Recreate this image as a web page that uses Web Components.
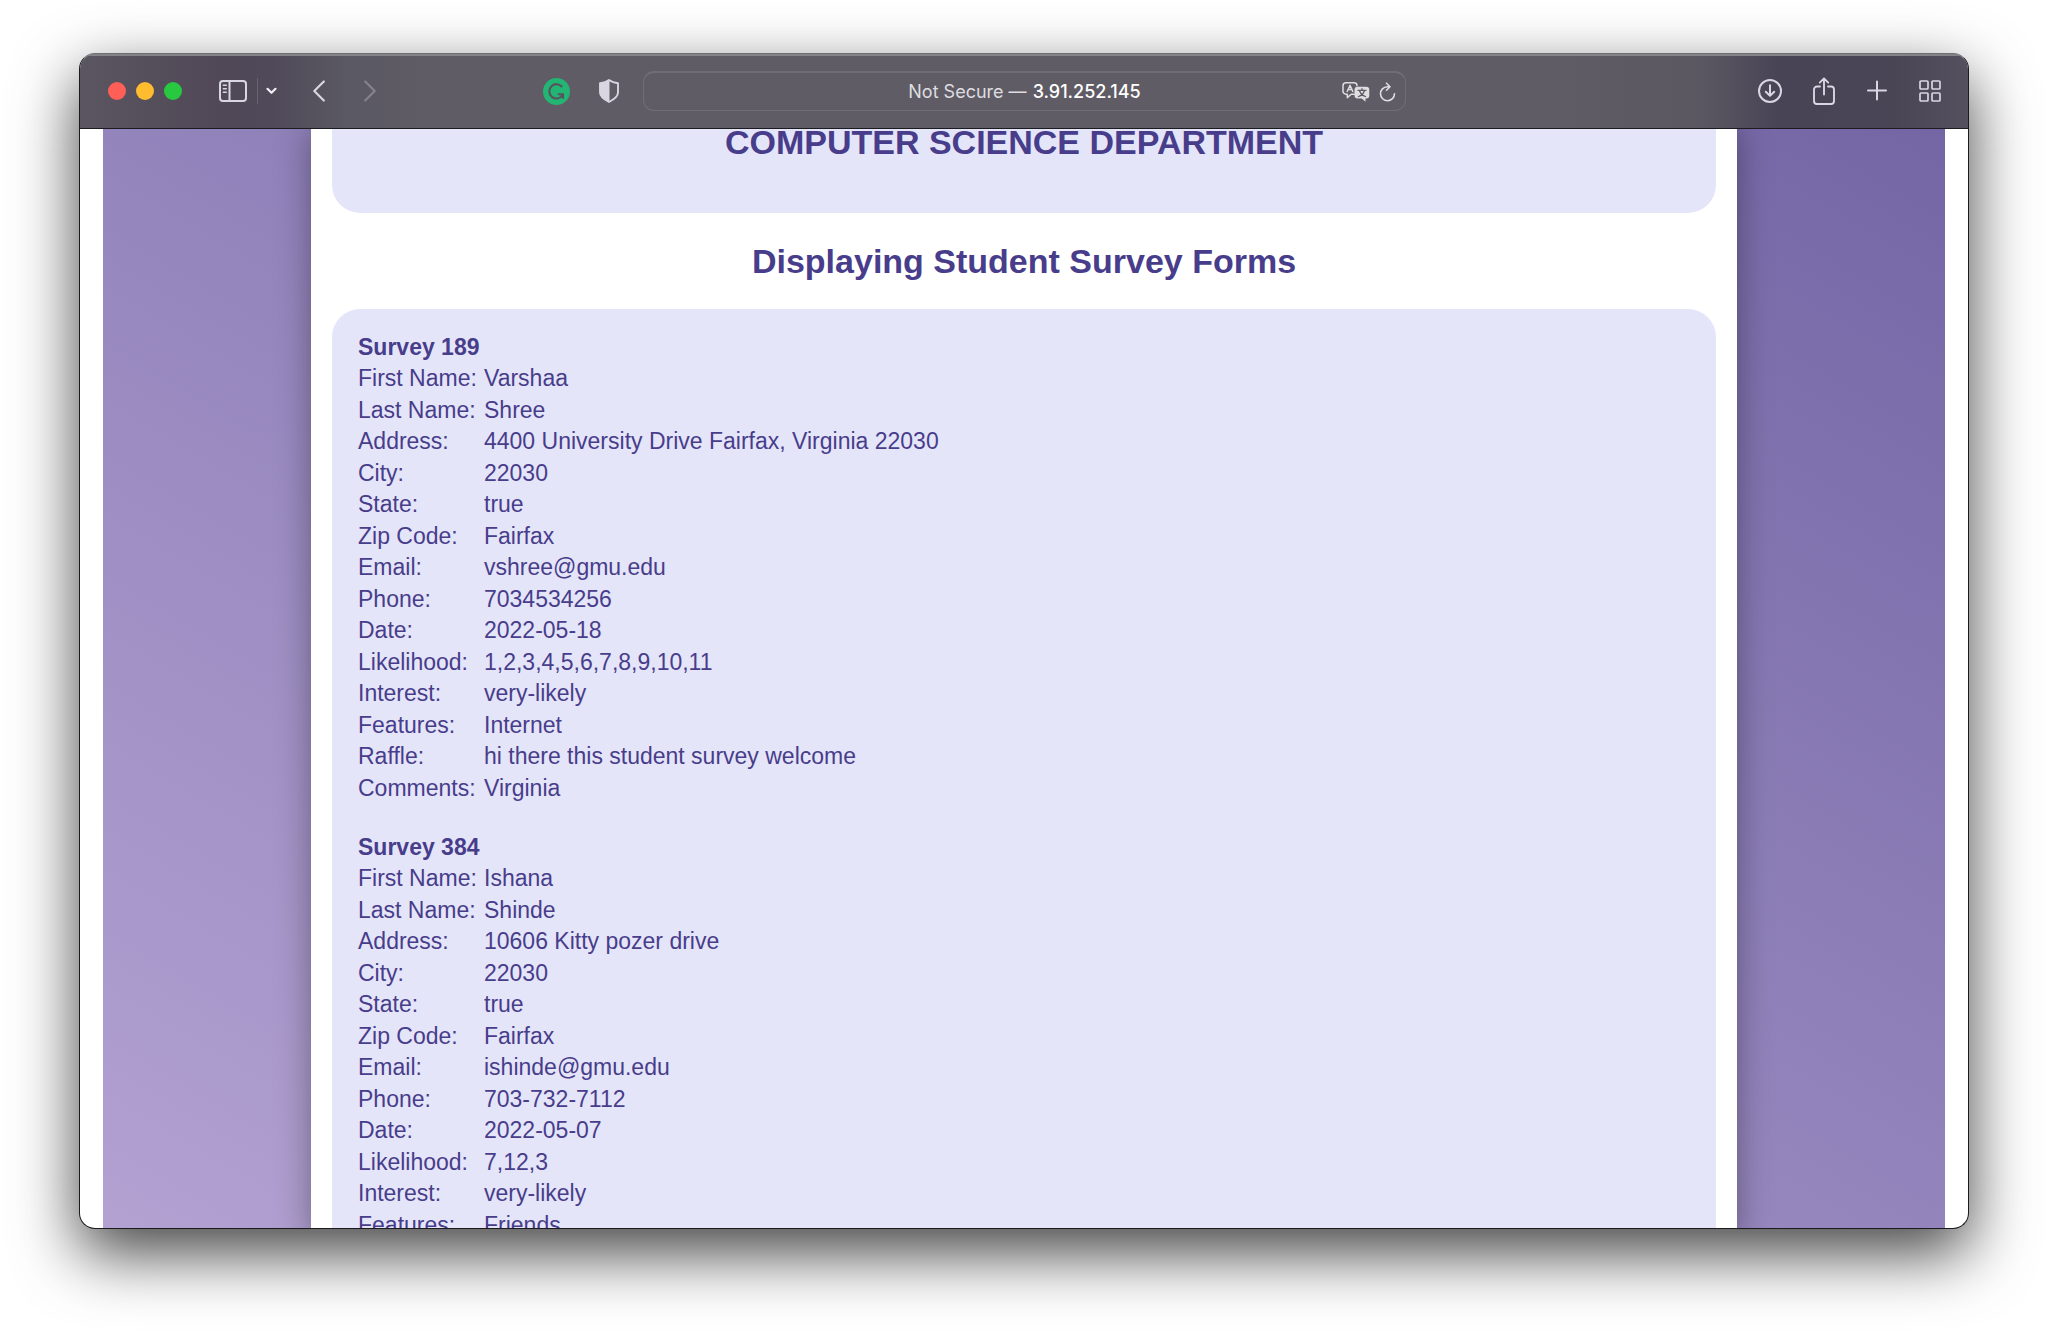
<!DOCTYPE html>
<html lang="en">
<head>
<meta charset="utf-8">
<title>Student Survey Forms</title>
<style>
html, body { margin: 0; height: 100%; background: #fff; overflow: hidden; }
body { font-family: "Liberation Sans", Helvetica, Arial, sans-serif; color: #483d8b; }
</style>
</head>
<body>
<browser-window>
  <browser-toolbar slot="toolbar" status="Not Secure —" address="3.91.252.145"></browser-toolbar>
  <survey-page>
    <span slot="department">COMPUTER SCIENCE DEPARTMENT</span>
    <span slot="title">Displaying Student Survey Forms</span>
    <survey-record number="189" values="Varshaa|Shree|4400 University Drive Fairfax, Virginia 22030|22030|true|Fairfax|vshree@gmu.edu|7034534256|2022-05-18|1,2,3,4,5,6,7,8,9,10,11|very-likely|Internet|hi there this student survey welcome|Virginia"></survey-record>
    <survey-record number="384" values="Ishana|Shinde|10606 Kitty pozer drive|22030|true|Fairfax|ishinde@gmu.edu|703-732-7112|2022-05-07|7,12,3|very-likely|Friends"></survey-record>
  </survey-page>
</browser-window>

<script>
class BrowserWindow extends HTMLElement {
  connectedCallback() {
    this.attachShadow({ mode: "open" }).innerHTML = `
<style>
:host { display: flex; box-sizing: border-box; height: 100vh; padding: 53px 79px 104px; }
.frame { flex: 1; min-width: 0; display: flex; flex-direction: column; overflow: hidden;
  border: 1px solid #1b1a1d; border-top-color: #6d6c70; border-radius: 16px; background: #fff;
  box-shadow: 0 24px 64px rgba(0,0,0,.74); }
main { flex: 1; min-height: 0; overflow: hidden; padding: 0 23px; display: flex; }
::slotted(survey-page) { flex: 1; min-width: 0; }
</style>
<div class="frame"><slot name="toolbar"></slot><main><slot></slot></main></div>`;
  }
}

class BrowserToolbar extends HTMLElement {
  connectedCallback() {
    this.attachShadow({ mode: "open" }).innerHTML = `
<style>
:host { display: flex; align-items: center; box-sizing: border-box; height: 75px; flex: none; color: #d9d5e1;
  box-shadow: inset 0 2px #858388; border-bottom: 1px solid #1c1b1f;
  background: linear-gradient(90deg, #5a5660 0, #524a58 6%, #504857 8%, #4f4959 10%, #5a5862 14%, #5f5c65 19%, #5f5c65 78%, #5a5761 86%, #494455 90%, #4a4555 96%, #55505e 100%); }
.side { flex: 1; display: flex; align-items: center; min-width: 0; }
.left { padding-left: 28px; }
.right { justify-content: flex-end; gap: 31px; padding-right: 27px; }
.lights { display: flex; gap: 10px; margin-right: 37px; }
button { appearance: none; border: 0; padding: 0; margin: 0; background: none; color: inherit; font: inherit; display: flex; }
svg { display: block; fill: none; stroke: currentColor; stroke-width: 2; stroke-linecap: round; stroke-linejoin: round; }
.lights button { width: 18px; height: 18px; border-radius: 50%; }
.close { background: #ff5f57; } .min { background: #febc2e; } .max { background: #28c840; }
.rule { width: 1px; height: 26px; margin: 0 8px 0 10px; background: #68636f; }
.back { margin-left: 36px; } .forward { margin-left: 39px; color: #85828b; }
.ext { margin-left: auto; display: flex; gap: 29px; padding-right: 24px; align-items: center; }
.field { flex: 0 0 763px; box-sizing: border-box; height: 40px; display: flex; align-items: center; gap: 9px;
  border: 1px solid #706d76; border-top-width: 2px; border-radius: 11px; padding: 0 9px 0 72px; color: #dedde0; }
.address { flex: 1; justify-content: center; gap: 6px; font: 400 18px/24px Inter, sans-serif; white-space: nowrap; }
.address b { font-weight: 500; color: #fff; }
</style>
<div class="side left">
  <div class="lights"><button class="close" aria-label="Close"></button><button class="min" aria-label="Minimise"></button><button class="max" aria-label="Zoom"></button></div>
  <button aria-label="Sidebar"><svg width="28" height="22" viewBox="0 0 28 22"><rect x="1" y="1" width="26" height="20" rx="3"/><path d="M10.5 1v20"/><path stroke-width="1.4" d="M4.3 5.3h3M4.3 8.8h3M4.3 12.3h3"/></svg></button>
  <span class="rule"></span>
  <button aria-label="Tab groups"><svg width="11" height="8" viewBox="0 0 11 8" style="color:#efedf3;stroke-width:2.2"><path d="M1.5 1.8l4 4 4-4"/></svg></button>
  <button class="back" aria-label="Back"><svg width="12" height="22" viewBox="0 0 12 22"><path stroke-width="2.2" d="M10.8 1.5L1.3 11l9.500 9.500"/></svg></button>
  <button class="forward" aria-label="Forward"><svg width="12" height="22" viewBox="0 0 12 22"><path stroke-width="2.2" d="M1.200 1.500L10.700 11l-9.500 9.500"/></svg></button>
  <div class="ext">
    <button aria-label="Writing assistant"><svg width="27" height="27" viewBox="0 0 27 27"><circle cx="13.500" cy="13.500" r="13.500" fill="#23b574" stroke="none"/><path d="M19.200 9A7.200 7.200 0 1 0 19.500 17.300M14.800 16.200H20v4.600" stroke="#56545c" stroke-width="2.100" stroke-linecap="butt" stroke-linejoin="miter"/></svg></button>
    <button aria-label="Privacy report"><svg width="20" height="24" viewBox="0 0 20 24"><path stroke-width="1.900" d="M10 1C7.400 2.900 4.500 3.800 1 4.300v9.200c0 4.400 4 6.900 9 9.500 5-2.600 9-5.100 9-9.500V4.300C15.500 3.800 12.600 2.900 10 1z"/><path fill="currentColor" stroke="none" d="M10.500 1C7.400 2.900 4.500 3.800 1 4.300v9.200c0 4.400 4 6.900 9.500 9.500z"/></svg></button>
  </div>
</div>
<div class="field">
  <button class="address"><span class="status"></span><b></b></button>
  <button aria-label="Translate"><svg width="28" height="22" viewBox="0 0 28 22"><path stroke-width="1.500" d="M12.300 13.200H9.200L5.300 16.600v-3.400H4A3 3 0 0 1 1 10.200V4.800A3 3 0 0 1 4 1.800h8a3 3 0 0 1 3 3"/><path stroke-width="1.500" d="M5.200 10.500L8 4.200l2.800 6.300M6.200 8.500h3.600"/><path fill="currentColor" stroke="none" d="M15.500 5.800h8.800a3 3 0 0 1 3 3v5.600a3 3 0 0 1-3 3h-.8v3.400l-3.700-3.400h-4.300a3 3 0 0 1-3-3V8.800a3 3 0 0 1 3-3z"/><path stroke="#5d5a63" stroke-width="1.300" d="M16 9.300h8M20 7.700v1.600M22.500 9.500c-.8 2.800-3 5-6 6M17.500 9.500c.8 2.800 3 5 6 6"/></svg></button>
  <button aria-label="Reload"><svg width="17" height="20" viewBox="0 0 17 20"><path stroke-width="1.600" d="M10 4.700H8.300a7 7 0 1 0 7.200 7M7.500 1.200L11 4.700 7.500 8.200"/></svg></button>
</div>
<div class="side right">
  <button aria-label="Downloads"><svg width="24" height="24" viewBox="0 0 24 24"><circle cx="12" cy="12" r="11"/><path d="M12 6.300v10.500M7.800 12.700l4.200 4.200 4.200-4.200"/></svg></button>
  <button aria-label="Share"><svg width="22" height="30" viewBox="0 0 22 30"><path stroke-width="1.900" d="M7 10.500H4a3 3 0 0 0-3 3V25a3 3 0 0 0 3 3h14a3 3 0 0 0 3-3V13.500a3 3 0 0 0-3-3h-3M11 18.500V2.500M6.800 6.600L11 2.400l4.200 4.200"/></svg></button>
  <button aria-label="New tab"><svg width="22" height="22" viewBox="0 0 22 22"><path d="M11 1.500v18M2 10.500h18"/></svg></button>
  <button aria-label="Tab overview"><svg width="22" height="22" viewBox="0 0 22 22"><path stroke-width="1.700" d="M2 1h6q1 0 1 1v6q0 1-1 1H2q-1 0-1-1V2q0-1 1-1zM14 1h6q1 0 1 1v6q0 1-1 1h-6q-1 0-1-1V2q0-1 1-1zM2 13h6q1 0 1 1v6q0 1-1 1H2q-1 0-1-1v-6q0-1 1-1zM14 13h6q1 0 1 1v6q0 1-1 1h-6q-1 0-1-1v-6q0-1 1-1z"/></svg></button>
</div>`;
    this.shadowRoot.querySelector(".status").textContent = this.getAttribute("status");
    this.shadowRoot.querySelector("b").textContent = this.getAttribute("address");
  }
}

class SurveyPage extends HTMLElement {
  connectedCallback() {
    this.attachShadow({ mode: "open" }).innerHTML = `
<style>
:host { display: block; padding: 0 208px; overflow: hidden;
  background: linear-gradient(to top right, #b2a1d1, #9384bc 50%, #7466a5); }
article { box-sizing: border-box; min-height: 100%; padding: 0 21px; background: #fff; box-shadow: 0 0 32px rgba(0,0,0,.36); }
h1, h2 { margin: 0; font-size: 34px; font-weight: 700; text-align: center; }
h1 { line-height: 26px; }
h2 { line-height: 96px; }
header { background: #e5e5f9; border-radius: 0 0 28px 28px; padding-bottom: 58px; }
section { display: flex; flex-direction: column; gap: 28px; background: #e5e5f9; border-radius: 28px 28px 0 0; padding: 23px 26px 0; }
</style>
<article>
  <header><h1><slot name="department"></slot></h1></header>
  <h2><slot name="title"></slot></h2>
  <section><slot></slot></section>
</article>`;
  }
}

const LABELS = ["First Name", "Last Name", "Address", "City", "State", "Zip Code", "Email", "Phone", "Date", "Likelihood", "Interest", "Features", "Raffle", "Comments"];

class SurveyRecord extends HTMLElement {
  connectedCallback() {
    this.attachShadow({ mode: "open" }).innerHTML = `
<style>
:host { display: block; font-size: 23px; line-height: 31px; }
table { border-collapse: collapse; }
caption { text-align: left; font-weight: 700; }
th, td { padding: 0; text-align: left; font-weight: 400; white-space: nowrap; vertical-align: top; }
th { min-width: 126px; }
tr:nth-child(odd) { height: 32px; }
</style>
<table><caption></caption><tbody></tbody></table>`;
    this.shadowRoot.querySelector("caption").textContent = "Survey " + this.getAttribute("number");
    const body = this.shadowRoot.querySelector("tbody");
    this.getAttribute("values").split("|").forEach((value, i) => {
      const row = body.insertRow();
      const label = document.createElement("th");
      label.scope = "row";
      label.textContent = LABELS[i] + ":";
      row.append(label);
      row.insertCell().textContent = value;
    });
  }
}

customElements.define("browser-window", BrowserWindow);
customElements.define("browser-toolbar", BrowserToolbar);
customElements.define("survey-page", SurveyPage);
customElements.define("survey-record", SurveyRecord);
</script>
</body>
</html>
